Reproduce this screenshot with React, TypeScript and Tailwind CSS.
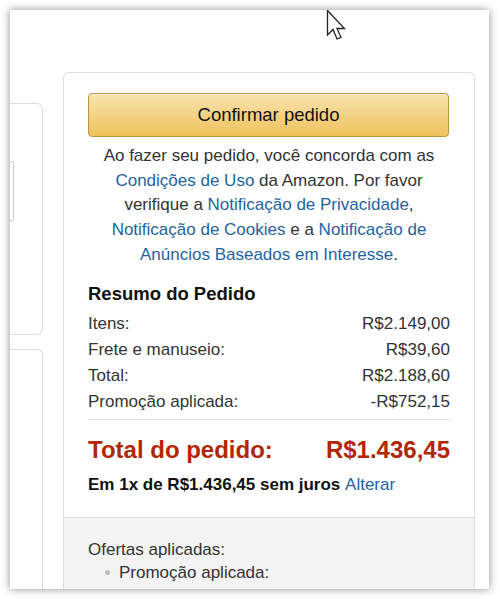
import React from "react";

const Link = ({ children }: { children: React.ReactNode }) => (
  <span className="text-[#1f64a0]">{children}</span>
);

export default function App() {
  return (
    <div className="w-[500px] h-[599px] bg-white p-[10px] overflow-hidden" style={{ fontFamily: '"Liberation Sans", Arial, sans-serif' }}>
      <div className="relative w-[479px] h-[579px] bg-white overflow-hidden shadow-[0_0_8px_rgba(0,0,0,0.45)] flex">
        {/* left column */}
        <div className="w-[33px] shrink-0 flex flex-col">
          <div className="mt-[93px] h-[252px] border-y border-r border-[#dddddd] rounded-r-[6px] relative">
            <div className="absolute left-0 top-[57px] w-[4px] h-[60px] border-y border-r border-[#cccccc] rounded-r-[2px]" />
          </div>
          <div className="mt-[14px] h-[260px] border-t border-r border-[#dddddd] rounded-tr-[6px]" />
        </div>
        {/* main card */}
        <div className="ml-[20px] w-[412px] shrink-0 mt-[62px] border border-[#dddddd] rounded-t-[6px] flex flex-col text-[#111]">
          <div className="px-[24px]">
            <button className="mt-[20px] w-[361px] h-[44px] rounded-[4px] border border-[#b9943d] bg-gradient-to-b from-[#f8e3ad] to-[#efc25a] text-[18.5px] text-[#111] shadow-[inset_0_1px_0_rgba(255,255,255,0.6)]">
              Confirmar pedido
            </button>
            <p className="mt-[7px] -mx-[4px] text-center text-[17px] leading-[24.7px] text-[#333]">
              Ao fazer seu pedido, você concorda com as <Link>Condições de Uso</Link> da Amazon. Por favor verifique a <Link>Notificação de Privacidade</Link>, <Link>Notificação de Cookies</Link> e a <Link>Notificação de Anúncios Baseados em Interesse</Link>.
            </p>
            <h2 className="mt-[14px] text-[18.5px] font-bold leading-[24px] text-[#111]">Resumo do Pedido</h2>
            <div className="mt-[5px] text-[17px] leading-[26px] text-[#333]">
              <div className="flex justify-between"><span>Itens:</span><span>R$2.149,00</span></div>
              <div className="flex justify-between"><span>Frete e manuseio:</span><span>R$39,60</span></div>
              <div className="flex justify-between"><span>Total:</span><span>R$2.188,60</span></div>
              <div className="flex justify-between"><span>Promoção aplicada:</span><span>-R$752,15</span></div>
            </div>
            <div className="mt-[4px] border-t border-[#dddddd]" />
            <div className="mt-[15px] flex justify-between text-[24px] font-bold leading-[30px] text-[#b12704]">
              <span>Total do pedido:</span><span>R$1.436,45</span>
            </div>
            <div className="mt-[9px] text-[17px] leading-[22px] font-bold text-[#111]">
              Em 1x de R$1.436,45 sem juros <span className="font-normal text-[#1f64a0]">Alterar</span>
            </div>
          </div>
          <div className="mt-[21px] flex-1 bg-[#f3f3f3] border-t border-[#dddddd] px-[24px] pt-[20px] text-[17px] leading-[23px] text-[#333]">
            <div>Ofertas aplicadas:</div>
            <ul className="pl-[31px]">
              <li className="relative"><span className="absolute -left-[14px] top-[9px] w-[5px] h-[5px] rounded-full bg-[#bbbbbb]" />Promoção aplicada:</li>
              <li className="relative"><span className="absolute -left-[14px] top-[9px] w-[5px] h-[5px] rounded-full bg-[#bbbbbb]" />Promoção aplicada:</li>
            </ul>
          </div>
        </div>
        {/* cursor */}
        <svg className="absolute left-[316px] top-0" width="24" height="34" viewBox="0 0 24 34">
          <path d="M1.5 0.5 L1.5 25 L7 19.5 L11 29 L15 27.3 L11 18.5 L18.5 18.5 Z" fill="white" stroke="#222" strokeWidth="1.3" strokeLinejoin="miter" />
        </svg>
      </div>
    </div>
  );
}
